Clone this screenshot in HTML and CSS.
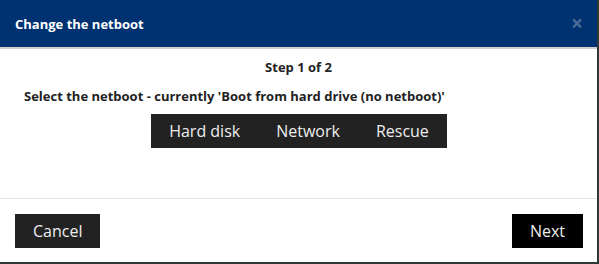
FILE: index.html
```html
<!DOCTYPE html>
<html lang="en">
<head>
  <meta charset="UTF-8">
  <title>Change the netboot</title>
  <link rel="stylesheet" href="styles.css">
</head>
<body>

<div class="modal">
  <div class="modal-header">
    <h4 class="modal-title">Change the netboot</h4>
    <span class="close">&times;</span>
  </div>

  <div class="modal-body">
    <div class="step">Step 1 of 2</div>
    <div class="question">Select the netboot - currently 'Boot from hard drive (no netboot)'</div>
    <div class="choices">
      <button class="choice">Hard disk</button>
      <button class="choice">Network</button>
      <button class="choice">Rescue</button>
    </div>
  </div>

  <div class="modal-footer">
    <button class="btn btn-cancel">Cancel</button>
    <button class="btn btn-next">Next</button>
  </div>
</div>

</body>
</html>
```

FILE: styles.css
```css
body {
  margin: 0;
  background: #2f3a36;
  font-family: 'Open Sans', sans-serif;
}

.modal {
  width: 597px;
  height: 262px;
  background: #fff;
  display: flex;
  flex-direction: column;
}

.modal-header {
  background: #003271;
  height: 47px;
  border-bottom: 2px solid #cfcfcf;
  display: flex;
  align-items: center;
  justify-content: space-between;
  padding: 0 15px;
}

.modal-title {
  margin: 0;
  color: #fff;
  font-size: 13px;
  font-weight: bold;
}

.close {
  color: #4a6a98;
  font-size: 21px;
  font-weight: bold;
  line-height: 1;
  margin-right: -1px;
}

.modal-body {
  flex: 1;
  display: flex;
  flex-direction: column;
  align-items: center;
  padding-top: 9px;
}

.step {
  font-size: 13px;
  font-weight: bold;
  color: #222;
  line-height: 18px;
}

.question {
  align-self: flex-start;
  margin: 11px 0 0 24px;
  font-size: 13px;
  font-weight: bold;
  color: #222;
  line-height: 18px;
}

.choices {
  display: flex;
  margin-top: 9px;
  margin-left: 1px;
  background: #222;
}

.choice {
  background: #222;
  color: #eee;
  border: none;
  font-family: inherit;
  font-size: 16px;
  height: 34px;
  padding: 0 18px;
}

.modal-footer {
  border-top: 1px solid #e5e5e5;
  display: flex;
  justify-content: space-between;
  padding: 15px 14px 14px 15px;
}

.btn {
  border: none;
  color: #eee;
  font-family: inherit;
  font-size: 16px;
  height: 34px;
  padding: 0 18px;
}

.btn-cancel {
  background: #222;
}

.btn-next {
  background: #000;
}
```
